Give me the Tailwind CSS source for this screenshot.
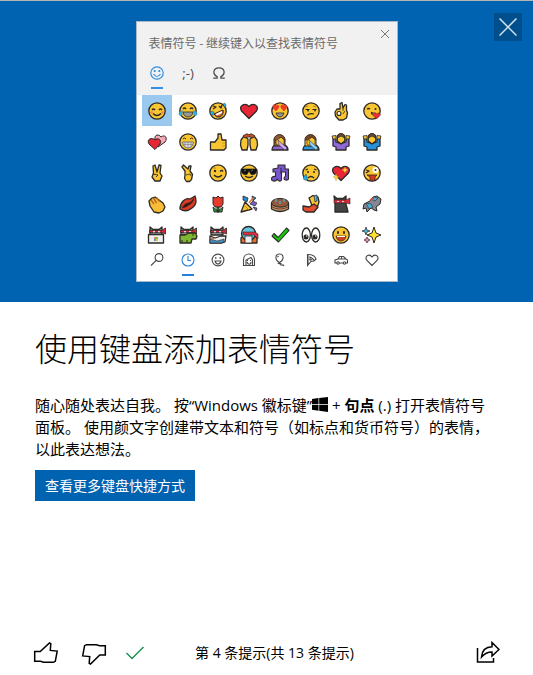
<!DOCTYPE html>
<html lang="zh-CN">
<head>
<meta charset="utf-8">
<meta name="viewport" content="width=device-width, initial-scale=1">
<title>使用键盘添加表情符号</title>
<script src="https://cdn.jsdelivr.net/npm/@tailwindcss/browser@4"></script>
</head>
<body class="flex min-h-screen flex-col bg-white font-['Open_Sans','Noto_Sans_CJK_SC',sans-serif] text-black">
<header class="relative flex justify-center border-t border-[#b5b5b5] bg-[#0063b1] pt-5 pb-5">
  <section class="w-[262px] border border-[#a9b9c8] bg-white" aria-label="表情符号面板">
    <div class="bg-[#f1f1f1]">
      <div class="flex items-start justify-between pl-3">
        <h2 class="pt-[11px] text-[12px] leading-5 whitespace-nowrap text-[#6a6a6a] font-['Noto_Sans_CJK_SC',sans-serif]">表情符号 - 继续键入以查找表情符号</h2>
        <button class="p-2" aria-label="关闭面板"><svg class="block size-2" viewBox="0 0 8 8" fill="none" stroke="#777"><path d="M0 0l8 8M8 0L0 8"/></svg></button>
      </div>
      <nav class="flex pt-2 pb-[2px] pl-[5px]">
        <button class="flex h-8 w-[31px] flex-col items-center justify-between pt-1 pb-1" aria-label="表情符号">
          <svg class="size-4" viewBox="0 0 16 16" fill="none" stroke="#2f8ee0" stroke-width="1.200"><circle cx="8" cy="8" r="6.200"/><path d="M4.500 9Q8 14 11.500 9"/><circle cx="5.700" cy="6" r=".5" fill="#2f8ee0"/><circle cx="10.300" cy="6" r=".5" fill="#2f8ee0"/></svg>
          <span class="h-[2px] w-3 bg-[#3191e4]"></span>
        </button>
        <button class="h-8 w-[31px] pb-2 text-[13px] leading-6 text-[#4c4c4c]" aria-label="颜文字">;-)</button>
        <button class="flex h-8 w-[31px] justify-center pt-1" aria-label="符号">
          <svg class="size-4" viewBox="0 0 16 16" fill="none" stroke="#4c4c4c" stroke-width="1.300"><path d="M2.200 13.200h4v-1.500C1.200 9 2 2.800 8 2.800s6.800 6.200 1.800 8.900v1.500h4"/></svg>
        </button>
      </nav>
    </div>
    <div class="grid grid-cols-8 pr-[9px] pl-[5px]" id="emoji"></div>
    <nav class="grid grid-cols-8 pr-[9px] pb-[5px] pl-[5px]" id="categories" aria-label="类别"></nav>
  </section>
  <button class="absolute top-3 right-[11px] flex size-7 items-center justify-center bg-[#004f8d]" aria-label="关闭">
    <svg class="size-[18px]" viewBox="0 0 18 18" fill="none" stroke="#d5e3ef" stroke-width="1.500"><path d="M.5.5l17 17M17.500.5l-17 17"/></svg>
  </button>
</header>
<main class="flex-1 px-[35px] pt-[22px]">
  <h1 class="font-['Noto_Sans_CJK_SC',sans-serif] text-[32px] leading-[46px] font-extralight">使用键盘添加表情符号</h1>
  <p class="pt-6 text-[15px] leading-[22px]">随心随处表达自我。 按“Windows 徽标键”<svg class="inline-block h-[15px] w-4 align-[-1px]" viewBox="0 0 16 15" role="img" aria-label="Windows"><path d="M0 2l6.500-1v6H0zM7.200.9L16 0v7H7.200zM0 7.700h6.500v6L0 12.700zM7.200 7.700H16V15l-8.800-1.200z"/></svg> + <b>句点</b> (.) 打开表情符号面板。 使用颜文字创建带文本和符号（如标点和货币符号）的表情，以此表达想法。</p>
  <button class="mt-[10px] h-[31px] bg-[#0063b1] px-[10px] text-[14px] leading-5 text-white">查看更多键盘快捷方式</button>
</main>
<footer class="flex items-center px-[33px]">
  <button aria-label="喜欢"><svg class="block size-[26px]" viewBox="0 0 26 26" fill="none" stroke="#000" stroke-width="1.500"><path d="M1.700 11.500h5.500L16.500 3l1.300.7-.5 6.700 6.900.7-1.900 10.200-2 1H10.500l-3-1H1.700z"/></svg></button>
  <button class="ml-[22px]" aria-label="不喜欢"><svg class="block size-[26px]" viewBox="0 0 26 26" fill="none" stroke="#000" stroke-width="1.500"><path d="M24.300 15h-5.500L9.500 24l-1.300-.7.5-6.700-7-.7 1.900-10.200 2-1h9.900l3 1h5.800z"/></svg></button>
  <svg class="ml-[18px] h-5 w-5" viewBox="0 0 20 20" fill="none" stroke="#16934c" stroke-width="1.400" role="img" aria-label="已完成"><path d="M1.500 10l5.500 5.500L18.500 4"/></svg>
  <p class="ml-[50px] text-[14px] leading-[44px] whitespace-nowrap">第 4 条提示(共 13 条提示)</p>
  <button class="ml-auto" aria-label="共享"><svg class="block size-6" viewBox="0 0 24 24" fill="none" stroke="#000" stroke-width="1.500"><path d="M1.500 7v14h16v-4M5.500 16C6 9.500 9 6 16 5.800V1.500L23 8.500l-7 6.500v-4C11 11 8.500 12.500 5.500 16z"/></svg></button>
</footer>
<script>
const Y = '#f9c531', K = '#2c2926';
const face = `<circle cx="10" cy="10" r="8.200" fill="${Y}"/>`;
const p = (d, fill = 'none', w = 1.3, s = K) => `<path d="${d}" fill="${fill}" stroke="${s}" stroke-width="${w}"/>`;
const dot = (x, y, r, f = K) => `<circle cx="${x}" cy="${y}" r="${r}" fill="${f}" stroke="none"/>`;
const heart = 'M10 17.500L2.500 10C-.5 4.500 6 1 10 5.500 14 1 20.500 4.500 17.500 10z';
const cat = p('M3 10V2l3 2.500h6L15 2v8z', '#8b8b91') + p('M2.500 5.500h12l4-2.500v6l-4-1.500h-12z', '#d5283b', .8) + dot(7, 6.6, .9, '#fff') + dot(12, 6.6, .9, '#fff');
const woman = (shirt, hair) => p('M2 18c0-4 2-5 5-6h5c4 1 6 3 6 6z', shirt) + p('M4 14V8C4 1 15 1 15 8v6z', shirt === '#2a9be0' ? Y : hair, 1) + p('M6 7c2 0 4-1 5-2l3 3v4l-4 2-4-2z', Y, .6) + p('M4 8c0-7 11-7 11 0l-4-3-4 3z', hair, .6) + p('M8 8l9 8-2 2-6-5z', shirt === '#2a9be0' ? '#8ed0f4' : '#d0aaf5', .5);
const shrug = shirt => p('M2 6l3 1v3l3 1h4l3-1V7l3-1v8l-3 1v3H5v-3l-3-1z', shirt) + p('M1 4l4-.5V7H2zM19 4l-4-.5V7h3z', Y, .8) + p('M6.200 9V5c0-4 7.600-4 7.600 0v4L10 12z', Y) + p('M6.200 6c0-6 7.600-6 7.600 0L10 4z', '#72482d', .8);
const emoji = [
  ['微笑', face + p('M5 9q1.500-2 3 0M12 9q1.500-2 3 0M6 12.500q4 4 8 0') + dot(4.6, 11.5, 1.3, '#f1854b') + dot(15.4, 11.5, 1.3, '#f1854b')],
  ['喜极而泣', face + p('M5 8q1.500-2 3 0M12 8q1.500-2 3 0') + p('M5 11h10q-1 5-5 5t-5-5z', '#999', .8) + p('M4.500 9.500L1 12q0 4 3 2zM15.500 9.500L19 12q0 4-3 2z', '#27b4e7', .5, '#2389b3')],
  ['笑得打滚', face + p('M5 8l3-2-3-1M11 5l2 2 1-3') + p('M6 13l9-4q1 5-3 7-4 1-6-3z', '#c63', 1) + p('M7.500 13l6.500-3v2l-5 2.500z', '#fff', 0) + p('M2 11q4-2 4 1 0 3-3 2zM15 3q3-2 3 2l-1 2z', '#29b3e2', .4)],
  ['红心', p(heart, '#e82535')],
  ['花痴', face + p('M6 10L3 7c-1-4 2-4 3-2C7.500 3 10 4 8.500 7zM14 10l-3-3c-1-4 2-4 3-2 1.500-2 4-1 2.500 2z', '#ee3b2a', .4, '#d62c22') + p('M6 12h8q-1 4-4 4t-4-4z', '#999', .8)],
  ['不高兴', face + p('M4.500 8.500h4M11.500 8.500h4M6.500 14q3-2 6.500-1', 'none', 1.2) + dot(7, 9.5, .9) + dot(14, 9.5, .9) + p('M4 6l3-1M12 5l3 1', 'none', .8, '#a66c22')],
  ['好的', p('M9 8V2.500L11 1.500 12 7l2-3.500 1.500.500V9l1 3-1 5-3.500 2H8L4.500 15 4 11 6 8z', Y) + `<circle cx="8" cy="12.500" r="2" fill="#fff" stroke-width="1.100"/>` + p('M12 7v3M14 10l-2 3', 'none', .8)],
  ['飞吻', face + p('M5 8q1.500-1 3 0M9 13q3-1 0-1.500') + dot(13.5, 8, 1) + p('M14.500 18l-4-4c0-3 3-3 4-1 1-2 4-1 4 1z', '#e92f32', .4)],
  ['双心', p('M11 15l-3-7c-1-6 4-6 6-3 4-3 7 1 4 5z', '#f4a9b7', 1) + p('M8 17.500L2 12c-3-5 3-7 6-4 3-3 7 0 5 4z', '#e82535', 1)],
  ['露齿笑', face + p('M5 7q1.500-2 3 0M12 7q1.500-2 3 0', 'none', 1) + p('M4.500 10h11q-1 6-5.500 6t-5.500-6z', '#ddd', 1, '#777') + p('M7 10v5M10 10v6M13 10v5M5 12.500h10', 'none', .6, '#777')],
  ['赞', p('M2.500 10H7l3-4V2h3l1 6h4v8l-2 2H2.500z', Y) + p('M14 11h4M14 14h3', 'none', .6, '#ba831d')],
  ['万岁', p('M2 8l3-4 4 3v6l-1 5H3L1.500 13zM18 8l-3-4-4 3v6l1 5h5l1.500-5z', Y) + p('M4 4l3-2h2l1 1 1-1h2l3 2-2 2-3-1H9L6 6z', '#c64c24', .8)],
  ['女生捂脸', woman('#9263d2', '#91592f')],
  ['男生捂脸', woman('#2a9be0', '#784825')],
  ['女生耸肩', shrug('#9069d8')],
  ['男生耸肩', shrug('#2692de')],
  ['胜利', p('M6.500 10L6 3l2-1 2 7 2-7 2 .5L13 10l2 3-2 5H8l-3-4z', Y) + p('M6 11l5 1-2 2', 'none', .9)],
  ['交叉手指', p('M7 12V8L4 4l1.500-2L10 6l1-3h2l-1 5 2.500 3.500-1 5-2 2H8.500l-2-3z', Y) + p('M8 12l4-1 1 2', 'none', .8)],
  ['眨眼', face + dot(7, 8, 1.2) + p('M12 8.500q2-2 3 0M6 12q4 4 8 0') + p('M5 5h3', 'none', .7, '#a66c22')],
  ['墨镜', face + p('M2 6h16l-1 4-2 1.500h-3L10 8l-2 3.500H5L3 10z', '#111', .7) + p('M6 13q4 3 8 0') + p('M5 8l2-1M12 8l2-1', 'none', .7, '#999')],
  ['音符', p('M8 2h7v4h3.500v10c-1 2-5 1-4.500-1l1.500-2V9h-4v8c-1 2-4 1-4-1l-1 1c-2 2-5 1-5-1s2-3 4-2.500V9H3V6l5-1z', '#7655cd', 1.1) + p('M11 5v6', 'none', 1)],
  ['哭泣', face + dot(7, 9, 1) + dot(13, 9, 1) + p('M7 15q3-3 6 0M4.500 7L7 6M13 6l2.500 1') + p('M5 11q-5 5-1 6t1-6z', '#23aee5', .4)],
  ['闪亮的心', p(heart, '#e82535') + p('M5 11l1 2 2 1-2 1-1 3-1-3-2-1 2-1zM14 4l1 2 2 1-2 1-1 2-1-2-2-1 2-1z', '#f7cf39', .3, '#c48918')],
  ['吐舌眨眼', face + p('M4 7l3 1-3 2') + dot(13.5, 7, 3, '#fff') + dot(13.5, 7, 1) + p('M5 12h10l-2 2v3q-3 2-5 0v-3z', '#d93624', .8)],
  ['鼓掌', p('M3 12L2 7l3-3 3-1 4 3 4 3 2 4-2 4-4 2-5-1z', '#f8bd36') + p('M4 6l3 4M6.500 4l3 5M9.500 3.500l3 4', 'none', 1.5, '#b96c23')],
  ['唇印', p('M2 15C2 9 7 3 12 5l5-3q3 8-3 12-6 5-12 1z', '#de3b26') + p('M4 14q3-5 6-5t6-5q0 4-5 7-4 3-7 3z', '#351711', .5)],
  ['玫瑰', p('M9 11h2v7H9zM10 17l-5-4 1 5h4zM10 17l5-4-1 5h-4z', '#25943b', .9) + p('M5 3l3 1 2-2 2 2 3-1v7l-2 3H7l-2-3z', '#e83b2e', 1)],
  ['派对', p('M2 18L6 8l7 7z', Y) + p('M11 10l3-3 4 2-2 3zM14 13l4 1-1 3z', '#7658c6', .7) + p('M4 2l5 2-1 4-4-2zM13 2l4 2-3 3z', '#2885cf', .8) + p('M10 9l4-5', 'none', 1.5, '#df6e2e') + p('M6 12l5 5', 'none', .8, '#b47616')],
  ['蛋糕', p('M1.500 9v6q8.500 5 17 0V9z', '#c9986f') + p('M1.500 9c0-6 17-6 17 0s-17 5-17 0z', '#94583a', 1) + p('M2 13q8 4 16 0', 'none', 1, '#71402d') + p('M6 8V5M10 10V7M14 8V5', 'none', 1.3, '#47b5da')],
  ['自拍', p('M10 9L8 4l4-2.500L17 3l1 5-2 6h-4z', '#f8c531') + p('M2 12l6 1 5-3 4 3-4 5H5l-3-2z', '#e34d2e') + p('M13 2l3-1v6l-2 1z', '#58b6df', .7)],
  ['忍者猫', p('M4 18v-8L3 2l3 2.500h6L15 2v8l2 8z', '#444') + p('M3 6h12l4-2v6l-4-1H3z', '#df293a', .6) + dot(7, 7.5, .8, '#fff') + dot(12, 7.5, .8, '#fff')],
  ['独角兽猫', p('M2 10l6-3 3-4 4-1 4 3-1 5-4 3 1 4-3-1-3-2-4 4-1-4-3 1z', '#848894', 1) + p('M4 9l5 1 2 3-4 2zM9 5l4 2 3-3-4-1z', '#46afd6', .6) + p('M8 6l4-2', 'none', 1.5, '#e74a43')],
  ['电脑猫', cat + p('M1.500 9.500h15v8.500h-15z', '#eee') + dot(8, 13, 1.1, '#e8642c') + dot(10, 13, 1.1, '#69ac30') + dot(8, 15, 1.1, '#2a8bd5') + dot(10, 15, 1.1, '#f0b51e')],
  ['恐龙猫', cat + p('M2 10h5l4-2h6l2 3-1 3h-4l-1 4H2z', '#7eb72f') + dot(15, 10, .8) + p('M4 15v3M9 15v3', 'none', 1)],
  ['时尚猫', cat + p('M2 11l5 2 6-2h5l-1 6-3 1H2z', '#eee') + p('M2 14l7 2 7-2v3l-3 1H2z', '#488cbb', .6) + p('M3 13l3 1', 'none', 1.5, '#dc762c')],
  ['宇航猫', p('M2 18v-5l3-3h10l3 3v5z', '#e56f2c') + `<circle cx="9.500" cy="8.500" r="7" fill="#6cc3df"/>` + p('M4 7h12l3 2v5l-4-4H4z', '#d93240', .6) + p('M6 11h7v7H6z', '#eee', .8)],
  ['对勾', p('M2 11l2-2.500 4 4L16.500 3 19 5.500 8.500 17z', '#16c60c', 1.1)],
  ['眼睛', `<ellipse cx="5.300" cy="10" rx="4.100" ry="7" fill="#fff"/><ellipse cx="14.700" cy="10" rx="4.100" ry="7" fill="#fff"/>` + dot(5, 12, 2.5) + dot(14, 12, 2.5) + dot(5.8, 11, .7, '#fff') + dot(14.8, 11, .7, '#fff')],
  ['笑脸', face + `<ellipse cx="7" cy="7.500" rx="1" ry="1.700" fill="${K}" stroke="none"/><ellipse cx="13" cy="7.500" rx="1" ry="1.700" fill="${K}" stroke="none"/>` + p('M5 11h10q-1 5-5 5t-5-5z', '#c84125', .7) + p('M6 11.500h8', 'none', 1, '#fff')],
  ['闪光', p('M12 2l2 6 5 2-5 2-2 6-2-6-5-2 5-2z', '#ffe22e', 1) + p('M4 2l1 3 3 1-3 1-1 3-1-3-3-1 3-1z', '#46b7dd', .7) + p('M5 12l1 2 2 1-2 1-1 2-1-2-2-1 2-1z', '#ef86b8', .7)]
];
document.getElementById('emoji').innerHTML = emoji.map(([name, art], i) =>
  `<button class="${i ? 'flex h-[31px] items-center justify-center' : 'flex h-[31px] items-center justify-center bg-[#99c9ef]'}" aria-label="${name}"><svg class="size-5" viewBox="0 0 20 20" stroke="${K}" stroke-width="1.300" stroke-linejoin="round">${art}</svg></button>`).join('');
const cats = [
  ['搜索', '<circle cx="10" cy="5.500" r="3.900"/><path d="M7.200 8.300L2 13.500"/>'],
  ['最近使用', '<circle cx="8" cy="8" r="6"/><path d="M8 4v4.500h3"/>'],
  ['笑脸', '<circle cx="8" cy="8" r="5.900"/><path d="M5 9h6q-1 3-3 3T5 9zM5.800 5v2M10.200 5v2"/>'],
  ['人物', '<path d="M2.500 13.500V8C2.500 0 13.500 0 13.500 8v5.500h-11zM5 13V8l5-2.500L11.500 8v5M6 10c1 3 4 3 4 0M6.500 8v1M9.500 8v1"/>'],
  ['庆祝', '<path d="M7.500 10.500C2.500 8 3 2 7.500 2s5 6 0 8.500l-1 1h3M8 11.500c0 3 3 0 4 2.500M5.500 5l1-1"/>'],
  ['食物', '<path d="M4.500 2.500Q11 2 13 7l-2 2-3 .5-3.500 4zM6 5q3 0 5 3.500M5 2.500v11"/><circle cx="7.500" cy="7.500" r=".8"/>'],
  ['交通', '<path d="M2 11V8l3-1 1.500-2.500h4L13 7l1.500 1v3H2zM5 7h8M8.500 5v2"/><circle cx="5" cy="11" r="1.200" fill="#fff"/><circle cx="11.500" cy="11" r="1.200" fill="#fff"/>'],
  ['符号', '<path d="M8 13.500L2.500 8C.5 3.500 5.500 1.500 8 5c2.500-3.500 7.500-1.500 5.500 3z"/>']
];
document.getElementById('categories').innerHTML = cats.map(([name, art], i) =>
  `<button class="flex h-[26px] flex-col items-center justify-between pt-[2px]" aria-label="${name}"><svg class="size-4" viewBox="0 0 16 16" fill="none" stroke="${i === 1 ? '#2582dc' : '#484848'}" stroke-width="1.100">${art}</svg>${i === 1 ? '<span class="h-[2px] w-3 bg-[#2582dc]"></span>' : ''}</button>`).join('');
</script>
</body>
</html>
